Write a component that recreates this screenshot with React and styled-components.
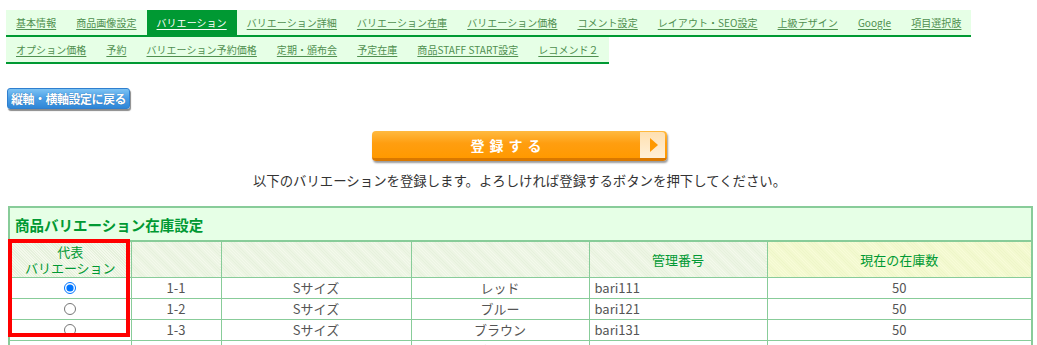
import styled, { createGlobalStyle } from "styled-components";

const tabRows = [
  ["基本情報", "商品画像設定", "バリエーション", "バリエーション詳細", "バリエーション在庫", "バリエーション価格", "コメント設定", "レイアウト・SEO設定", "上級デザイン", "Google", "項目選択肢"],
  ["オプション価格", "予約", "バリエーション予約価格", "定期・頒布会", "予定在庫", "商品STAFF START設定", "レコメンド２"],
];

const rows = [
  { no: "1-1", size: "Sサイズ", color: "レッド", code: "bari111", stock: 50, checked: true },
  { no: "1-2", size: "Sサイズ", color: "ブルー", code: "bari121", stock: 50 },
  { no: "1-3", size: "Sサイズ", color: "ブラウン", code: "bari131", stock: 50 },
  { no: "1-4", size: "Sサイズ", color: "ブラック", code: "bari141", stock: 50 },
];

const App = () => {
  return (
    <>
      <GlobalStyle />
      <Page>
        <Tabs>
          {tabRows.map((row, i) => (
            <TabRow key={i}>
              {row.map((t) => (
                <Tab key={t} $active={t === "バリエーション"}>
                  <a href="#">{t}</a>
                </Tab>
              ))}
            </TabRow>
          ))}
        </Tabs>

        <BackButton>縦軸・横軸設定に戻る</BackButton>

        <Submit>
          <SubmitButton>
            <span>登録する</span>
            <Arrow />
          </SubmitButton>
          <Notice>以下のバリエーションを登録します。よろしければ登録するボタンを押下してください。</Notice>
        </Submit>

        <TableWrap>
          <Table>
            <colgroup>
              <col style={{ width: 122 }} />
              <col style={{ width: 90 }} />
              <col style={{ width: 190 }} />
              <col style={{ width: 178 }} />
              <col style={{ width: 178 }} />
              <col />
            </colgroup>
            <thead>
              <tr>
                <Title colSpan={6}>商品バリエーション在庫設定</Title>
              </tr>
              <tr>
                <Th>代表<br />バリエーション</Th>
                <Th />
                <Th />
                <Th />
                <Th>管理番号</Th>
                <Th $yellow>現在の在庫数</Th>
              </tr>
            </thead>
            <tbody>
              {rows.map((r) => (
                <Row key={r.no}>
                  <Td><Radio type="radio" name="rep" defaultChecked={r.checked} /></Td>
                  <Td>{r.no}</Td>
                  <Td>{r.size}</Td>
                  <Td>{r.color}</Td>
                  <Td $left>{r.code}</Td>
                  <Td>{r.stock}</Td>
                </Row>
              ))}
            </tbody>
          </Table>
          <Highlight />
        </TableWrap>
      </Page>
    </>
  );
};

const GlobalStyle = createGlobalStyle`
  body {
    margin: 0;
    background: #fff;
    font-family: "Noto Sans CJK JP", "Noto Sans", sans-serif;
    overflow: hidden;
  }
`;

const Page = styled.div`
  padding: 10px 4px 0 6px;
`;

const Tabs = styled.div`
  display: flex;
  flex-direction: column;
  align-items: flex-start;
`;

const TabRow = styled.ul`
  display: flex;
  margin: 0;
  padding: 0;
  list-style: none;
  background: #e6ffe6;
  border-bottom: 2px solid #009933;
`;

const Tab = styled.li`
  height: 25px;
  display: flex;
  align-items: center;
  padding: 0 10px;
  background: ${(p) => (p.$active ? "#009933" : "transparent")};

  a {
    font-size: 10px;
    line-height: 1;
    letter-spacing: 0.05px;
    color: ${(p) => (p.$active ? "#fff" : "#4f8f4f")};
    text-decoration: underline;
    text-underline-offset: 2px;
  }
`;

const BackButton = styled.button`
  display: block;
  margin: 24px 0 0 1px;
  height: 21px;
  padding: 0 3px;
  border: 1px solid #2f7fcf;
  border-radius: 3px;
  background: linear-gradient(#7cc2f3, #4a9ee6 50%, #2f86d6);
  box-shadow: 1px 2px 1px #8a8a8a;
  color: #fff;
  font-family: "Noto Sans CJK JP", sans-serif;
  font-size: 12px;
  font-weight: bold;
  letter-spacing: -0.5px;
  text-shadow: 0 0 1px #1d5e9e;
`;

const Submit = styled.div`
  display: flex;
  flex-direction: column;
  align-items: center;
  margin-top: 22px;
`;

const SubmitButton = styled.div`
  width: 295px;
  height: 30px;
  box-sizing: border-box;
  border-radius: 4px;
  border-bottom: 3px solid #d97800;
  background: linear-gradient(#ffba40, #ff9e10 45%, #ff9900);
  box-shadow: 1px 2px 2px #9a9a9a;
  display: flex;
  align-items: center;

  span {
    flex: 1;
    text-align: center;
    color: #fff;
    font-size: 14px;
    font-weight: bold;
    letter-spacing: 5px;
    padding-left: 5px;
  }
`;

const Arrow = styled.div`
  width: 25px;
  height: 26px;
  margin-right: 2px;
  margin-top: 1px;
  background: linear-gradient(#ffe0b0, #fff0d8);
  border-radius: 0 3px 0 0;
  display: flex;
  align-items: center;
  justify-content: center;

  &::after {
    content: "";
    border-left: 8px solid #ff9900;
    border-top: 7px solid transparent;
    border-bottom: 7px solid transparent;
    margin-left: 2px;
  }
`;

const Notice = styled.p`
  margin: 10px 0 0;
  font-size: 13.4px;
  color: #333;
  line-height: 18px;
`;

const TableWrap = styled.div`
  position: relative;
  margin: 17px 0 0 2px;
`;

const Table = styled.table`
  width: 100%;
  table-layout: fixed;
  border-collapse: collapse;
  border: 2px solid #88cc99;
`;

const Title = styled.th`
  height: 32px;
  padding: 0 5px;
  text-align: left;
  background: #e6ffe6;
  border-bottom: 2px solid #88cc99;
  color: #009933;
  font-size: 14.5px;
  font-weight: bold;
`;

const Th = styled.th`
  height: 35px;
  padding: 0;
  border: 1px solid #88cc99;
  font-weight: normal;
  font-size: 13px;
  line-height: 16px;
  color: #009933;
  background: ${(p) =>
    p.$yellow
      ? "repeating-linear-gradient(45deg, #f8fcd8 0 1px, #eef6c8 1px 2px)"
      : "repeating-linear-gradient(45deg, #f4f9ec 0 1px, #e6f1dc 1px 2px)"};
`;

const Row = styled.tr`
  height: 21px;
`;

const Td = styled.td`
  padding: 0 5px;
  border: 1px solid #88cc99;
  text-align: ${(p) => (p.$left ? "left" : "center")};
  font-size: 13px;
  color: #555;
  line-height: 18px;
`;

const Radio = styled.input`
  display: block;
  margin: 0 auto;
  width: 12px;
  height: 12px;
`;

const Highlight = styled.div`
  position: absolute;
  left: 0;
  top: 33px;
  width: 122px;
  height: 98px;
  box-sizing: border-box;
  border: 4px solid #ff0000;
  pointer-events: none;
`;

export default App;
